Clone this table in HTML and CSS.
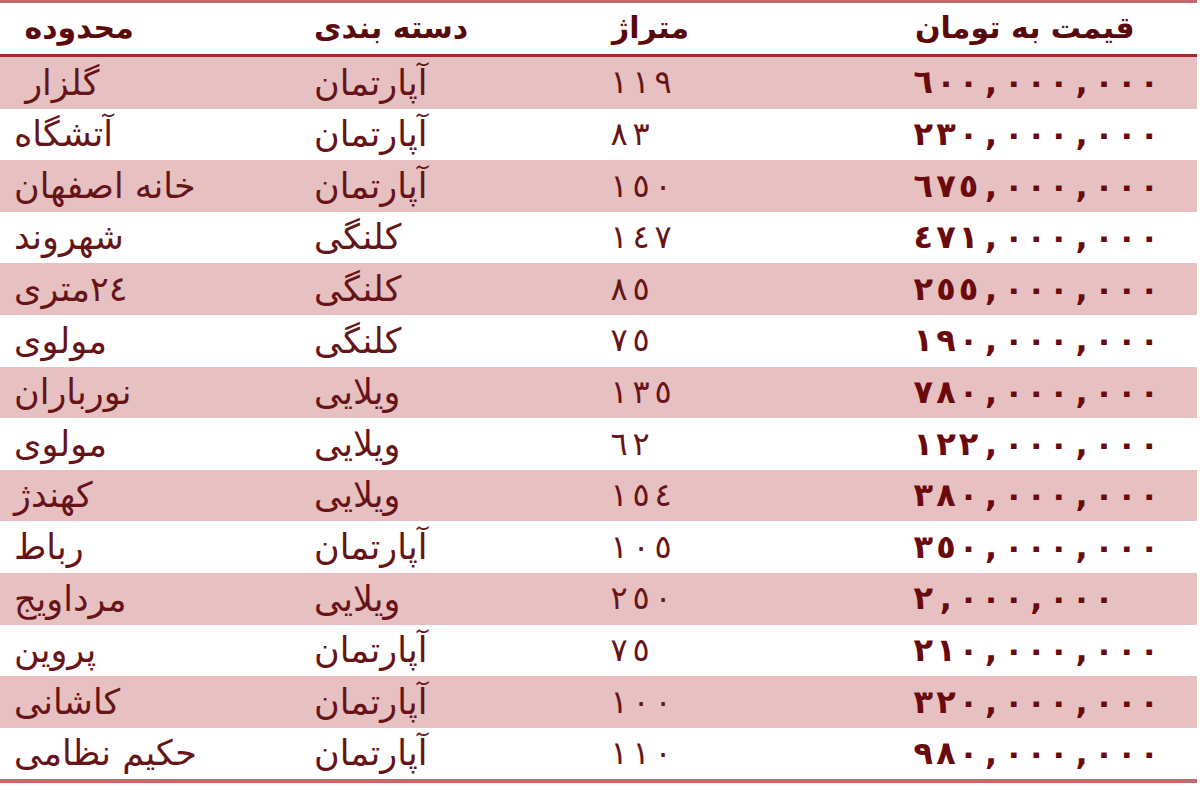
FILE: index.html
```html
<!DOCTYPE html>
<html lang="fa">
<head>
<meta charset="utf-8">
<title>قیمت مسکن</title>
<link rel="stylesheet" href="styles.css">
</head>
<body>
<table class="prices">
  <colgroup>
    <col class="c-area"><col class="c-type"><col class="c-size"><col class="c-price">
  </colgroup>
  <thead>
    <tr>
      <th>&nbsp;محدوده</th>
      <th>دسته بندی</th>
      <th>متراژ</th>
      <th>قیمت به تومان</th>
    </tr>
  </thead>
  <tbody>
    <tr class="alt"><td>&nbsp;گلزار</td><td>آپارتمان</td><td class="num"><span>١</span><span>١</span><span>٩</span></td><td class="price"><span>٦</span><span>٠</span><span>٠</span><span>,</span><span>٠</span><span>٠</span><span>٠</span><span>,</span><span>٠</span><span>٠</span><span>٠</span></td></tr>
    <tr><td>آتشگاه</td><td>آپارتمان</td><td class="num"><span>٨</span><span>٣</span></td><td class="price"><span>٢</span><span>٣</span><span>٠</span><span>,</span><span>٠</span><span>٠</span><span>٠</span><span>,</span><span>٠</span><span>٠</span><span>٠</span></td></tr>
    <tr class="alt"><td>خانه اصفهان</td><td>آپارتمان</td><td class="num"><span>١</span><span>٥</span><span>٠</span></td><td class="price"><span>٦</span><span>٧</span><span>٥</span><span>,</span><span>٠</span><span>٠</span><span>٠</span><span>,</span><span>٠</span><span>٠</span><span>٠</span></td></tr>
    <tr><td>شهروند</td><td>کلنگی</td><td class="num"><span>١</span><span>٤</span><span>٧</span></td><td class="price"><span>٤</span><span>٧</span><span>١</span><span>,</span><span>٠</span><span>٠</span><span>٠</span><span>,</span><span>٠</span><span>٠</span><span>٠</span></td></tr>
    <tr class="alt"><td>٢٤متری</td><td>کلنگی</td><td class="num"><span>٨</span><span>٥</span></td><td class="price"><span>٢</span><span>٥</span><span>٥</span><span>,</span><span>٠</span><span>٠</span><span>٠</span><span>,</span><span>٠</span><span>٠</span><span>٠</span></td></tr>
    <tr><td>مولوی</td><td>کلنگی</td><td class="num"><span>٧</span><span>٥</span></td><td class="price"><span>١</span><span>٩</span><span>٠</span><span>,</span><span>٠</span><span>٠</span><span>٠</span><span>,</span><span>٠</span><span>٠</span><span>٠</span></td></tr>
    <tr class="alt"><td>نورباران</td><td>ویلایی</td><td class="num"><span>١</span><span>٣</span><span>٥</span></td><td class="price"><span>٧</span><span>٨</span><span>٠</span><span>,</span><span>٠</span><span>٠</span><span>٠</span><span>,</span><span>٠</span><span>٠</span><span>٠</span></td></tr>
    <tr><td>مولوی</td><td>ویلایی</td><td class="num"><span>٦</span><span>٢</span></td><td class="price"><span>١</span><span>٢</span><span>٢</span><span>,</span><span>٠</span><span>٠</span><span>٠</span><span>,</span><span>٠</span><span>٠</span><span>٠</span></td></tr>
    <tr class="alt"><td>کهندژ</td><td>ویلایی</td><td class="num"><span>١</span><span>٥</span><span>٤</span></td><td class="price"><span>٣</span><span>٨</span><span>٠</span><span>,</span><span>٠</span><span>٠</span><span>٠</span><span>,</span><span>٠</span><span>٠</span><span>٠</span></td></tr>
    <tr><td>رباط</td><td>آپارتمان</td><td class="num"><span>١</span><span>٠</span><span>٥</span></td><td class="price"><span>٣</span><span>٥</span><span>٠</span><span>,</span><span>٠</span><span>٠</span><span>٠</span><span>,</span><span>٠</span><span>٠</span><span>٠</span></td></tr>
    <tr class="alt"><td>مرداویج</td><td>ویلایی</td><td class="num"><span>٢</span><span>٥</span><span>٠</span></td><td class="price"><span>٢</span><span>,</span><span>٠</span><span>٠</span><span>٠</span><span>,</span><span>٠</span><span>٠</span><span>٠</span></td></tr>
    <tr><td>پروین</td><td>آپارتمان</td><td class="num"><span>٧</span><span>٥</span></td><td class="price"><span>٢</span><span>١</span><span>٠</span><span>,</span><span>٠</span><span>٠</span><span>٠</span><span>,</span><span>٠</span><span>٠</span><span>٠</span></td></tr>
    <tr class="alt"><td>کاشانی</td><td>آپارتمان</td><td class="num"><span>١</span><span>٠</span><span>٠</span></td><td class="price"><span>٣</span><span>٢</span><span>٠</span><span>,</span><span>٠</span><span>٠</span><span>٠</span><span>,</span><span>٠</span><span>٠</span><span>٠</span></td></tr>
    <tr><td>حکیم نظامی</td><td>آپارتمان</td><td class="num"><span>١</span><span>١</span><span>٠</span></td><td class="price"><span>٩</span><span>٨</span><span>٠</span><span>,</span><span>٠</span><span>٠</span><span>٠</span><span>,</span><span>٠</span><span>٠</span><span>٠</span></td></tr>
  </tbody>
</table>
</body>
</html>
```
FILE: styles.css
```css
html, body {
  margin: 0;
  padding: 0;
  background: #ffffff;
}

.prices {
  width: 1197px;
  border-collapse: collapse;
  table-layout: fixed;
  font-family: "DejaVu Sans", sans-serif;
  color: #661417;
  border-top: 3px solid #c46a6d;
  border-bottom: 4px solid #c46a6d;
}

.c-area { width: 300px; }
.c-type { width: 298px; }
.c-size { width: 303px; }
.c-price { width: 296px; }

.prices th,
.prices td {
  padding: 0 0 0 14px;
  text-align: left;
  white-space: nowrap;
  vertical-align: middle;
  line-height: 1.15;
}

.prices th {
  height: 51px;
  font-size: 30px;
  font-weight: bold;
  color: #5a0a0d;
  border-bottom: 3px solid #a8262a;
}

.prices td {
  height: 51.6px;
  font-size: 35px;
  font-weight: normal;
}

.prices tr.alt td {
  background: #e7c0c2;
}

.prices td.num {
  font-size: 32px;
  padding-left: 10px;
}

.prices td.num span {
  display: inline-block;
  width: 22px;
  text-align: center;
}

.prices td.price {
  font-size: 32px;
  font-weight: bold;
  color: #6a0a0c;
  padding-left: 11px;
}

.prices td.price span {
  display: inline-block;
  width: 22.6px;
  text-align: center;
}
```
